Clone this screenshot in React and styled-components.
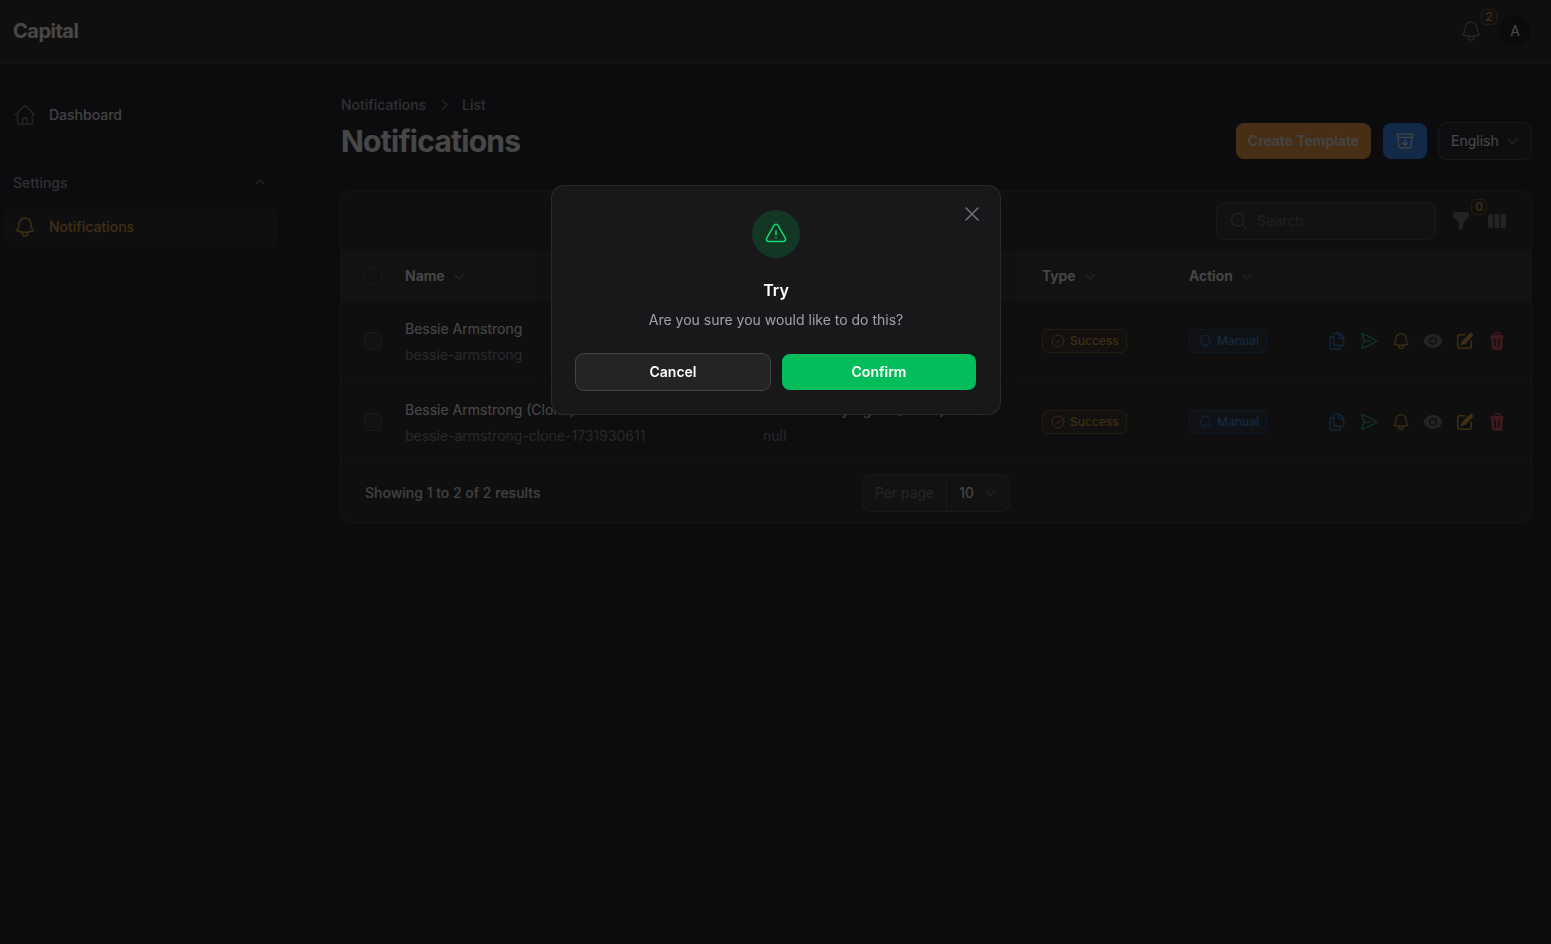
import React from "react";
import styled, { createGlobalStyle, css } from "styled-components";
import {
  HiOutlineHome,
  HiOutlineBell,
  HiOutlineArchiveBoxArrowDown,
  HiOutlineDocumentDuplicate,
  HiOutlinePaperAirplane,
  HiOutlineCheckCircle,
  HiOutlineExclamationTriangle,
  HiOutlineXMark,
  HiMiniChevronUp,
  HiMiniChevronDown,
  HiMiniChevronRight,
  HiMiniFunnel,
  HiMiniViewColumns,
  HiMiniEye,
  HiMiniPencilSquare,
  HiMiniTrash,
  HiOutlineMagnifyingGlass,
} from "react-icons/hi2";

const c = {
  page: "#151519",
  surface: "#222221",
  raised: "#2d2d2d",
  line: "#363637",
  ring: "#48484b",
  white: "#ffffff",
  text: "#e4e4e7",
  muted: "#a1a1aa",
  faint: "#71717a",
  dim: "#60606a",
  amber: "#e09e2a",
  orange: "#fd9a34",
  blue: "#2d87fa",
  green: "#22b876",
  red: "#e0484c",
};

const GlobalStyle = createGlobalStyle`
  *, *::before, *::after { box-sizing: border-box; }
  body {
    margin: 0;
    background: ${c.page};
    color: ${c.white};
    font-family: Inter, "Liberation Sans", sans-serif;
    font-size: 14px;
    line-height: 20px;
    -webkit-font-smoothing: antialiased;
  }
  button, input, select { font: inherit; color: inherit; }
  button { cursor: pointer; border: 0; padding: 0; background: none; }
  h1, h2, p { margin: 0; padding: 0; }
  a { color: inherit; text-decoration: none; }
  svg { display: block; flex: none; }
`;

const Page = styled.div`
  min-height: 100vh;
`;

const TopBar = styled.header`
  display: flex;
  align-items: center;
  justify-content: space-between;
  padding: 15px 20px 16px 13px;
  background: ${c.surface};
  border-bottom: 1px solid ${c.line};
`;

const Brand = styled.a`
  font-size: 20px;
  line-height: 28px;
  font-weight: 700;
  letter-spacing: -0.025em;
`;

const TopActions = styled.div`
  display: flex;
  align-items: center;
  gap: 16px;
`;

const Avatar = styled.button`
  width: 32px;
  height: 32px;
  border-radius: 50%;
  background: #121216;
  font-size: 14px;
`;

const IconButton = styled.button`
  position: relative;
  display: flex;
  color: ${(p) => p.$color || c.faint};
`;

const Counter = styled.span`
  position: absolute;
  left: ${(p) => p.$left};
  top: ${(p) => p.$top};
  width: 16px;
  height: 16px;
  border-radius: 5px;
  border: 1px solid #735620;
  background: #2c2318;
  color: ${c.amber};
  font-size: 12px;
  line-height: 14px;
  font-weight: 500;
  text-align: center;
`;

const Body = styled.div`
  display: flex;
  align-items: flex-start;
`;

const Sidebar = styled.nav`
  flex: none;
  width: 309px;
  padding: 31px 31px 32px 5px;
  display: flex;
  flex-direction: column;
  gap: 28px;
  font-weight: 500;
`;

const NavGroup = styled.div`
  display: flex;
  flex-direction: column;
  gap: 4px;
`;

const NavLabel = styled.button`
  display: flex;
  align-items: center;
  justify-content: space-between;
  padding: 8px;
  line-height: 24px;
  font-weight: 500;
  color: ${c.muted};
  svg { color: ${c.faint}; }
`;

const NavItem = styled.a`
  display: flex;
  align-items: center;
  gap: 12px;
  padding: 8px;
  border-radius: 8px;
  line-height: 24px;
  color: ${(p) => (p.$active ? c.amber : c.text)};
  background: ${(p) => (p.$active ? "#232326" : "transparent")};
  svg { color: ${(p) => (p.$active ? c.amber : c.faint)}; }
`;

const Main = styled.main`
  flex: 1;
  min-width: 0;
  padding: 31px 20px 32px 32px;
  display: flex;
  flex-direction: column;
  gap: 32px;
`;

const PageHeader = styled.div`
  display: flex;
  align-items: flex-end;
  justify-content: space-between;
`;

const Crumbs = styled.nav`
  display: flex;
  align-items: center;
  gap: 8px;
  margin-bottom: 8px;
  font-weight: 500;
  color: ${c.muted};
  svg { color: ${c.faint}; }
`;

const Title = styled.h1`
  font-size: 30px;
  line-height: 36px;
  font-weight: 700;
  letter-spacing: -0.025em;
`;

const HeaderActions = styled.div`
  display: flex;
  align-items: center;
  gap: 12px;
`;

const buttonBase = css`
  display: flex;
  align-items: center;
  justify-content: center;
  height: 36px;
  padding: 0 12px;
  border-radius: 8px;
  font-weight: 600;
`;

const ActionButton = styled.button`
  ${buttonBase}
  background: ${(p) => p.$bg};
  color: #f4f4f5;
`;

const SelectBox = styled.div`
  position: relative;
  display: flex;
  height: 36px;
  border-radius: 8px;
  background: ${(p) => p.$bg};
  box-shadow: 0 0 0 1px ${c.ring};
  font-weight: 400;
  svg {
    position: absolute;
    right: 8px;
    top: 8px;
    color: #66666e;
    pointer-events: none;
  }
`;

const SelectLabel = styled.label`
  display: flex;
  align-items: center;
  padding: 0 12px;
  border-right: 1px solid ${c.ring};
  color: #7c7c85;
`;

const Select = styled.select`
  appearance: none;
  width: ${(p) => p.$width};
  padding: 0 12px;
  border: 0;
  border-radius: 8px;
  background: transparent;
`;

const Card = styled.section`
  border-radius: 12px;
  background: ${c.surface};
  box-shadow: 0 0 0 1px ${c.line};
  overflow: hidden;
`;

const CardTools = styled.div`
  display: flex;
  align-items: center;
  justify-content: flex-end;
  gap: 16px;
  padding: 12px 24px;
`;

const SearchBox = styled.label`
  display: flex;
  align-items: center;
  gap: 8px;
  width: 218px;
  height: 36px;
  padding: 0 12px;
  border-radius: 8px;
  background: ${c.raised};
  box-shadow: 0 0 0 1px ${c.ring};
  svg { color: ${c.faint}; }
`;

const SearchInput = styled.input`
  flex: 1;
  min-width: 0;
  padding: 0;
  border: 0;
  background: transparent;
  &::placeholder { color: ${c.dim}; opacity: 1; }
`;

const TableWrap = styled.div`
  overflow-x: auto;
  border-top: 1px solid ${c.line};
  border-bottom: 1px solid ${c.line};
`;

const Table = styled.table`
  width: 100%;
  min-width: 1040px;
  table-layout: fixed;
  border-collapse: separate;
  border-spacing: 0;
  text-align: left;
  th:first-child, td:first-child { padding-left: 24px; }
`;

const Col = styled.col`
  width: ${(p) => p.$width};
`;

const Th = styled.th`
  height: 49px;
  padding: 0 12px;
  background: ${c.raised};
  border-bottom: 1px solid ${c.line};
  font-weight: 600;
`;

const SortButton = styled.button`
  display: flex;
  align-items: center;
  gap: 4px;
  font-weight: 600;
  svg { color: #66666e; }
`;

const Row = styled.tr`
  &:not(:last-child) td { border-bottom: 1px solid ${c.line}; }
`;

const Td = styled.td`
  padding: 16px 12px;
`;

const CellText = styled.p`
  line-height: 24px;
  margin-bottom: 4px;
  white-space: nowrap;
`;

const CellNote = styled.p`
  color: #85858f;
  white-space: nowrap;
`;

const Check = styled.input`
  appearance: none;
  display: block;
  width: 16px;
  height: 16px;
  margin: 0;
  border-radius: 4px;
  background: #2f2f2f;
  box-shadow: 0 0 0 1px #4e4e51;
`;

const Badge = styled.span`
  display: inline-flex;
  align-items: center;
  gap: 4px;
  height: 24px;
  padding: 0 7px;
  border-radius: 6px;
  border: 1px solid ${(p) => (p.$blue ? "#1c4a78" : "#735420")};
  background: ${(p) => (p.$blue ? "#202a33" : "#30281c")};
  color: ${(p) => (p.$blue ? "#3d8ad8" : "#d39a30")};
  svg { color: ${(p) => (p.$blue ? "#2b76cf" : "#d9822e")}; }
  font-size: 12px;
  line-height: 16px;
  font-weight: 500;
  vertical-align: middle;
`;

const RowActions = styled.div`
  display: flex;
  justify-content: flex-end;
  gap: 12px;
  padding-right: 12px;
`;

const CardFooter = styled.div`
  display: grid;
  grid-template-columns: 1fr auto 1fr;
  align-items: center;
  padding: 12px 24px;
  font-weight: 500;
`;

const Summary = styled.span`
  color: ${c.text};
`;

const Overlay = styled.div`
  position: fixed;
  inset: 0;
  background: rgba(9, 9, 11, 0.75);
`;

const DialogLayer = styled.div`
  position: fixed;
  inset: 0;
  display: grid;
  grid-template-rows: 1fr auto 3fr;
  justify-items: center;
  padding: 15px 15px 17px 16px;
`;

const Dialog = styled.div`
  grid-row: 2;
  position: relative;
  width: 100%;
  max-width: 448px;
  padding: 24px;
  display: flex;
  flex-direction: column;
  align-items: center;
  border-radius: 12px;
  background: #18181b;
  box-shadow: 0 0 0 1px #2a2a2d, 0 20px 25px -5px rgba(0, 0, 0, 0.1);
`;

const CloseButton = styled(IconButton)`
  position: absolute;
  top: 16px;
  right: 16px;
`;

const DialogIcon = styled.div`
  padding: 12px;
  border-radius: 50%;
  background: #133724;
  color: #12d973;
`;

const DialogTitle = styled.h2`
  margin-top: 20px;
  font-size: 16px;
  line-height: 24px;
  font-weight: 600;
`;

const DialogText = styled.p`
  margin-top: 8px;
  color: ${c.muted};
`;

const DialogActions = styled.div`
  display: grid;
  grid-template-columns: 1fr 1fr;
  gap: 12px;
  width: 100%;
  margin-top: 24px;
`;

const DialogButton = styled.button`
  ${buttonBase}
  color: ${c.white};
  background: ${(p) => (p.$primary ? "#02be5a" : "#242426")};
  box-shadow: ${(p) => (p.$primary ? "none" : "0 0 0 1px #454548")};
`;

const Chevron = () => (
  <svg width="21" height="21" viewBox="0 0 20 20" fill="none" aria-hidden="true">
    <path d="M6 8l4 4 4-4" stroke="currentColor" strokeWidth="1.5" strokeLinecap="round" strokeLinejoin="round" />
  </svg>
);

const columns = ["Name", "", "Type", "Action"];

const rows = [
  { name: "Bessie Armstrong", slug: "bessie-armstrong" },
  {
    name: "Bessie Armstrong (Clone)",
    slug: "bessie-armstrong-clone-1731930611",
    title: "Lead Identity Agent (Clone)",
    note: "null",
  },
];

const rowActions = [
  { label: "Duplicate", Icon: HiOutlineDocumentDuplicate, color: "#3580d8" },
  { label: "Try", Icon: HiOutlinePaperAirplane, color: c.green },
  { label: "Notify", Icon: HiOutlineBell, color: "#d39a30" },
  { label: "View", Icon: HiMiniEye, color: c.faint },
  { label: "Edit", Icon: HiMiniPencilSquare, color: "#d9a02f" },
  { label: "Delete", Icon: HiMiniTrash, color: c.red },
];

export default function App() {
  return (
    <>
      <GlobalStyle />
      <Page>
        <TopBar>
          <Brand href="#">Capital</Brand>
          <TopActions>
            <IconButton aria-label="Open notifications">
              <HiOutlineBell size={24} />
              <Counter $left="22px" $top="-10px">2</Counter>
            </IconButton>
            <Avatar aria-label="User menu">A</Avatar>
          </TopActions>
        </TopBar>
        <Body>
          <Sidebar aria-label="Main">
            <NavItem href="#">
              <HiOutlineHome size={24} />
              Dashboard
            </NavItem>
            <NavGroup>
              <NavLabel>
                Settings
                <HiMiniChevronUp size={20} />
              </NavLabel>
              <NavItem href="#" $active>
                <HiOutlineBell size={24} />
                Notifications
              </NavItem>
            </NavGroup>
          </Sidebar>
          <Main>
            <PageHeader>
              <div>
                <Crumbs aria-label="Breadcrumb">
                  <a href="#">Notifications</a>
                  <HiMiniChevronRight size={20} />
                  <a href="#">List</a>
                </Crumbs>
                <Title>Notifications</Title>
              </div>
              <HeaderActions>
                <ActionButton $bg={c.orange}>Create Template</ActionButton>
                <ActionButton $bg={c.blue} aria-label="Archive">
                  <HiOutlineArchiveBoxArrowDown size={20} />
                </ActionButton>
                <SelectBox $bg="#1e1e22">
                  <Select $width="92px" aria-label="Language" defaultValue="English">
                    <option>English</option>
                  </Select>
                  <Chevron />
                </SelectBox>
              </HeaderActions>
            </PageHeader>
            <Card>
              <CardTools>
                <SearchBox>
                  <HiOutlineMagnifyingGlass size={20} />
                  <SearchInput type="search" placeholder="Search" aria-label="Search" />
                </SearchBox>
                <IconButton aria-label="Filter">
                  <HiMiniFunnel size={20} />
                  <Counter $left="20px" $top="-12px">0</Counter>
                </IconButton>
                <IconButton aria-label="Toggle columns">
                  <HiMiniViewColumns size={20} />
                </IconButton>
              </CardTools>
              <TableWrap>
                <Table>
                  <colgroup>
                    <Col $width="52px" />
                    <Col $width="358px" />
                    <Col $width="279px" />
                    <Col $width="147px" />
                    <Col />
                  </colgroup>
                  <thead>
                    <tr>
                      <Th><Check type="checkbox" aria-label="Select all" /></Th>
                      {columns.map((name) => (
                        <Th key={name}>
                          {name && (
                            <SortButton>
                              {name}
                              <HiMiniChevronDown size={20} />
                            </SortButton>
                          )}
                        </Th>
                      ))}
                      <Th aria-label="Row actions" />
                    </tr>
                  </thead>
                  <tbody>
                    {rows.map((row) => (
                      <Row key={row.slug}>
                        <Td><Check type="checkbox" aria-label={`Select ${row.name}`} /></Td>
                        <Td>
                          <CellText>{row.name}</CellText>
                          <CellNote>{row.slug}</CellNote>
                        </Td>
                        <Td>
                          <CellText>{row.title}</CellText>
                          <CellNote>{row.note}</CellNote>
                        </Td>
                        <Td>
                          <Badge><HiOutlineCheckCircle size={16} />Success</Badge>
                        </Td>
                        <Td>
                          <Badge $blue><HiOutlineBell size={16} />Manual</Badge>
                        </Td>
                        <Td>
                          <RowActions>
                            {rowActions.map(({ label, Icon, color }) => (
                              <IconButton key={label} $color={color} aria-label={label}>
                                <Icon size={20} />
                              </IconButton>
                            ))}
                          </RowActions>
                        </Td>
                      </Row>
                    ))}
                  </tbody>
                </Table>
              </TableWrap>
              <CardFooter>
                <Summary>Showing 1 to 2 of 2 results</Summary>
                <SelectBox $bg={c.raised}>
                  <SelectLabel htmlFor="per-page">Per page</SelectLabel>
                  <Select id="per-page" $width="62px" defaultValue="10">
                    <option>10</option>
                  </Select>
                  <Chevron />
                </SelectBox>
              </CardFooter>
            </Card>
          </Main>
        </Body>
      </Page>
      <Overlay />
      <DialogLayer>
        <Dialog role="dialog" aria-modal="true" aria-labelledby="dialog-title">
          <CloseButton aria-label="Close">
            <HiOutlineXMark size={24} />
          </CloseButton>
          <DialogIcon>
            <HiOutlineExclamationTriangle size={24} />
          </DialogIcon>
          <DialogTitle id="dialog-title">Try</DialogTitle>
          <DialogText>Are you sure you would like to do this?</DialogText>
          <DialogActions>
            <DialogButton>Cancel</DialogButton>
            <DialogButton $primary>Confirm</DialogButton>
          </DialogActions>
        </Dialog>
      </DialogLayer>
    </>
  );
}
